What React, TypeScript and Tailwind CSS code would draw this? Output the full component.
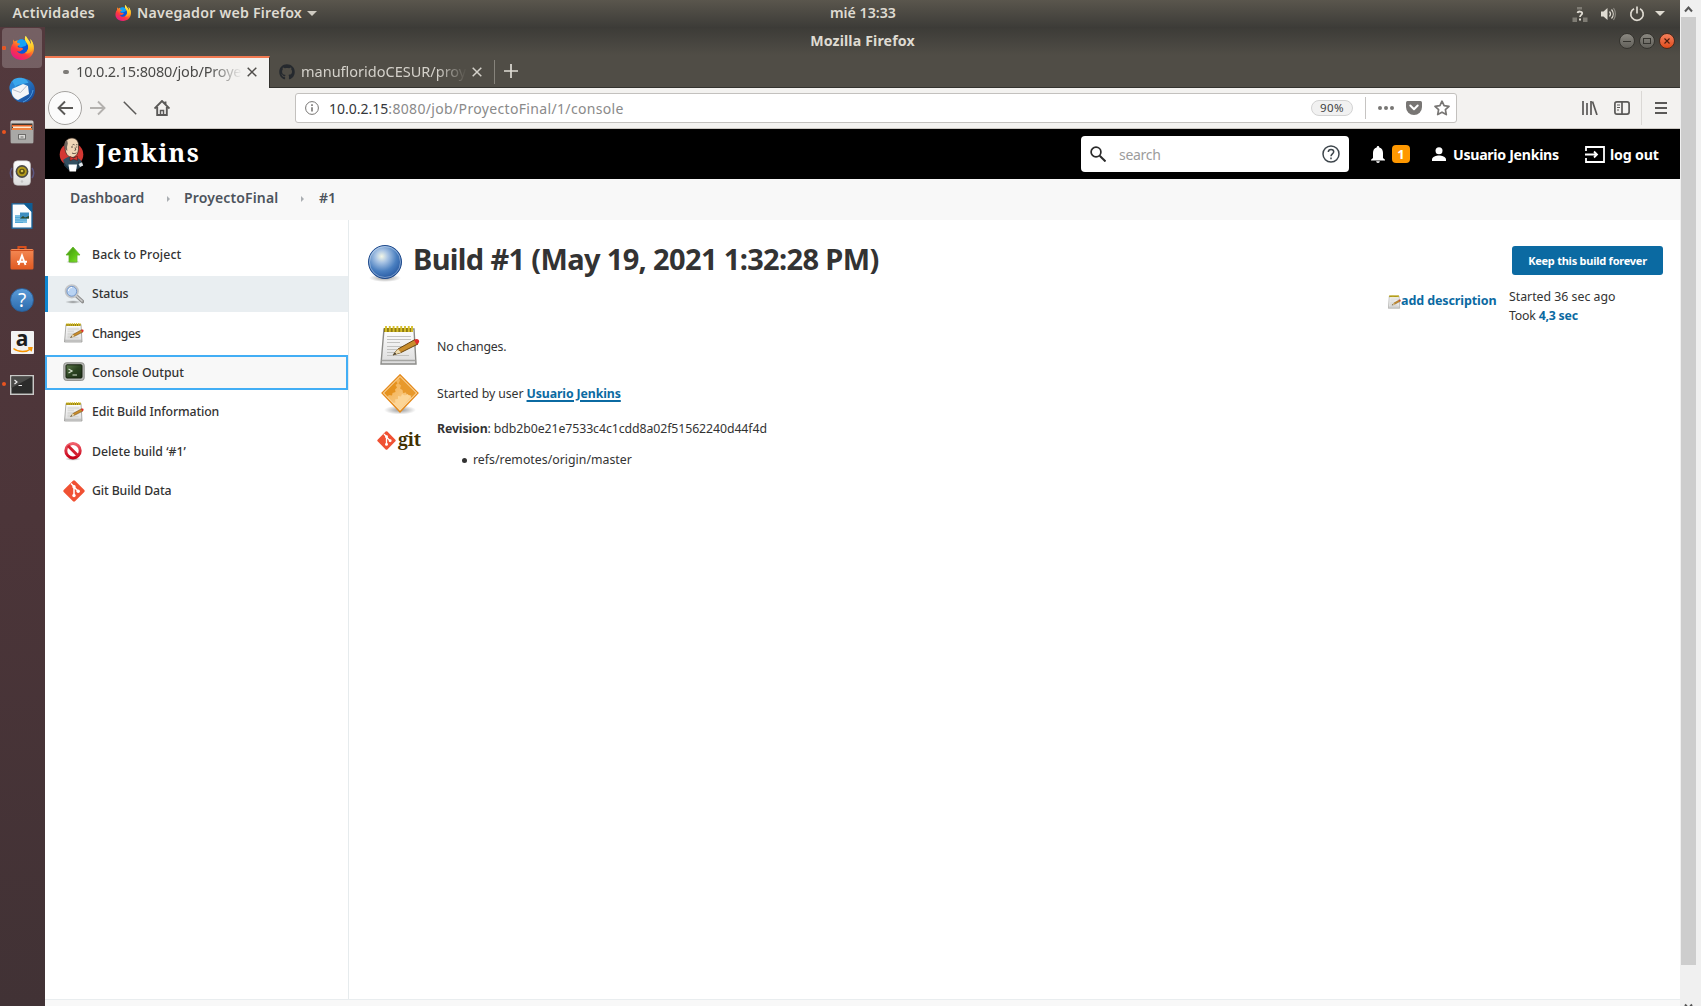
import React from "react";
import { FaGithub } from "react-icons/fa";

type P = { className?: string };

function Defs() {
  return (
    <svg width="0" height="0" className="absolute">
      <defs>
        <linearGradient id="ffo" x1="0.8" y1="0" x2="0.2" y2="1">
          <stop offset="0" stopColor="#fff44f" /><stop offset="0.35" stopColor="#ffa41e" /><stop offset="0.65" stopColor="#ff3a3c" /><stop offset="1" stopColor="#e01590" />
        </linearGradient>
        <linearGradient id="ffy" x1="0" y1="0" x2="0" y2="1">
          <stop offset="0" stopColor="#fff44f" /><stop offset="0.6" stopColor="#ffc928" /><stop offset="1" stopColor="#ff9020" />
        </linearGradient>
        <linearGradient id="tb" x1="0" y1="0" x2="1" y2="1">
          <stop offset="0" stopColor="#2fa0e8" /><stop offset="1" stopColor="#173f8f" />
        </linearGradient>
        <linearGradient id="gray" x1="0" y1="0" x2="0" y2="1">
          <stop offset="0" stopColor="#d0cfcd" /><stop offset="1" stopColor="#8c8b89" />
        </linearGradient>
        <linearGradient id="paper" x1="0" y1="0" x2="0" y2="1">
          <stop offset="0" stopColor="#ffffff" /><stop offset="1" stopColor="#dcdcdc" />
        </linearGradient>
        <linearGradient id="orange" x1="0" y1="0" x2="0" y2="1">
          <stop offset="0" stopColor="#f58a55" /><stop offset="1" stopColor="#e05a22" />
        </linearGradient>
        <linearGradient id="green" x1="0" y1="0" x2="1" y2="1">
          <stop offset="0" stopColor="#3f8f10" /><stop offset="0.6" stopColor="#5fc516" /><stop offset="1" stopColor="#8de23a" />
        </linearGradient>
        <linearGradient id="con" x1="0" y1="0" x2="1" y2="1">
          <stop offset="0" stopColor="#5d7a4c" /><stop offset="0.5" stopColor="#2b4321" /><stop offset="1" stopColor="#1c2e17" />
        </linearGradient>
        <linearGradient id="no" x1="0" y1="0" x2="0" y2="1">
          <stop offset="0" stopColor="#f0606c" /><stop offset="1" stopColor="#c60016" />
        </linearGradient>
        <radialGradient id="ball" cx="0.4" cy="0.33" r="0.75">
          <stop offset="0" stopColor="#f3f7e6" /><stop offset="0.25" stopColor="#a9c4e4" /><stop offset="0.6" stopColor="#4a7fc0" /><stop offset="1" stopColor="#1e4f9a" />
        </radialGradient>
        <radialGradient id="shade">
          <stop offset="0" stopColor="#000" stopOpacity="0.4" /><stop offset="1" stopColor="#000" stopOpacity="0" />
        </radialGradient>
        <linearGradient id="dia" x1="0" y1="0" x2="1" y2="1">
          <stop offset="0" stopColor="#f0a53c" /><stop offset="1" stopColor="#fdd9a0" />
        </linearGradient>
      </defs>
    </svg>
  );
}

const Firefox = ({ className }: P) => (
  <svg viewBox="0 0 24 24" className={className}>
    <circle cx="12" cy="12.200" r="8.800" fill="#0a56d8" />
    <path d="M7 5c3-2.500 6.500-2 8.500 0 2 2.500 1 5.500-2 5.500l-3 1-3-2z" fill="#13a3f5" />
    <path d="M3.500 3.500c-.6 1.200-.5 2.600-.3 3.500C.8 10 0 14 1.200 17.500 3 22 7.500 24 12.200 24 18.500 24 24 19 24 12.500c0-3-1-6.500-3.800-9.500.8 2 .9 4 .5 5.500-.8-3.600-3.600-5.500-4.900-8.500-2.300 3 .6 6 1.900 8.500 1.300 3 .2 6.800-2.800 8.500-3 1.400-6.700.4-8-2 1.800.8 3.600.4 4.700-.8 1.200-.8 1.800-.4 1.400-1.400-.8-1.400-2.600-.5-4-1.200C7.500 11 7.600 10.400 8 9.500l1.800-1c.5-.5.4-1-.1-1.100-1 0-2.200-.2-2.500-.9C7 5.600 7.400 5 8 4.300c-1.600.2-2.600.6-3.200 1.300-.6-.4-1-1.100-1.300-2.100z" fill="url(#ffo)" />
    <path d="M15.800 0c-2.300 3 .6 6 1.900 8.500 1.300 3 .2 6.800-2.800 8.500 4 1.500 8-1.500 8.500-6 .2-3-1-6-3.200-8 .8 2 .9 4 .5 5.500-.8-3.600-3.600-5.500-4.900-8.500z" fill="url(#ffy)" />
  </svg>
);

const Thunderbird = () => (
  <svg viewBox="0 0 26 26" className="mb-[1px] size-[26px]">
    <circle cx="14" cy="13.500" r="12" fill="url(#tb)" />
    <path d="M1 9C2 4 5 1 10 .8c5-.3 8 2 9.500 5L8 8 3 13z" fill="#3aa7ec" />
    <path d="M.5 9 3 4l3 5-3 8C1 15 0 12 .5 9z" fill="#2a86d6" />
    <path d="M3 12 14 7l5 2 1 8-11 6c-5-2-7-6-6-11z" fill="#f4f5f7" />
    <path d="m3.500 12.500 8 3L17.500 9" fill="none" stroke="#b8bec9" strokeWidth="1" />
    <path d="M14 25c5-2 9-6 10-12" fill="none" stroke="#4f9de0" strokeWidth="1" />
  </svg>
);

const Files = () => (
  <svg viewBox="0 0 24 24" className="size-6">
    <rect x="0.500" y="0.500" width="23" height="23" rx="1.500" fill="url(#gray)" />
    <rect x="1.500" y="3.500" width="21" height="8.500" fill="#42362f" />
    <rect x="2" y="5" width="20" height="2" fill="#e8672a" />
    <rect x="3" y="6.500" width="18" height="2" fill="#fbe7cf" />
    <rect x="2" y="8" width="20" height="2" fill="#ee8342" />
    <rect x="1" y="10" width="22" height="13" fill="#a9a8a6" />
    <rect x="8.500" y="14.500" width="7" height="4.500" fill="#dcdbd9" stroke="#6d6c6a" />
    <rect x="10.500" y="16.500" width="3" height="1" fill="#6d6c6a" />
  </svg>
);

const Speaker = () => (
  <svg viewBox="0 0 26 26" className="mb-[2px] size-[26px]">
    <path d="M3 8c-2 3-2 7 0 10M23 8c2 3 2 7 0 10" fill="none" stroke="#5c5780" strokeWidth="1.500" />
    <rect x="4.500" y="0.800" width="17" height="24.500" rx="4" fill="url(#paper)" stroke="#c0c0c0" strokeWidth="0.600" />
    <circle cx="13" cy="11.500" r="6.400" fill="#4b4a48" />
    <circle cx="13" cy="11.500" r="4.800" fill="#b29a1c" />
    <circle cx="13" cy="11.500" r="2.800" fill="#5b4f12" />
    <circle cx="13" cy="11" r="1.300" fill="#d8c34a" />
    <circle cx="13" cy="21.500" r="1.200" fill="#c4c4c4" />
  </svg>
);

const Writer = () => (
  <svg viewBox="0 0 24 26" className="h-[26px] w-6">
    <path d="M2 .8h12.500L22 8.500v16.700H2z" fill="#fcfdfe" stroke="#12619a" strokeWidth="1.300" />
    <path d="M13.500 0H22.500V9.500z" fill="#0f5d94" />
    <rect x="5" y="12" width="12" height="8" fill="#7cbfe2" />
    <rect x="10" y="9.500" width="9" height="6" fill="#3f8fc0" />
    <path d="m10 15.500 3-2.500 2 1.500 4-1.500v2.500z" fill="#2d4a2c" />
    <path d="M5 14.500h5M5 17h12M5 19.500h8" stroke="#4aa3d4" strokeWidth="0.900" />
  </svg>
);

const Software = () => (
  <svg viewBox="0 0 24 26" className="h-[26px] w-6">
    <path d="M8.500 5V2h7v3" fill="none" stroke="#d64f1d" strokeWidth="2.200" />
    <rect x="0.500" y="4" width="23" height="20.500" rx="1.500" fill="url(#orange)" />
    <path d="M0.500 5.500h23" stroke="#c8491a" strokeWidth="1" />
    <path d="m8.500 20 3.500-9.500 3.500 9.500M7 16.800h10" fill="none" stroke="#fff" strokeWidth="1.900" />
  </svg>
);

const HelpApp = () => (
  <span className="flex size-6 items-center justify-center rounded-full border border-[#2a5f98] bg-linear-to-b from-[#5b9bd8] to-[#2c6cad] font-['Noto_Sans'] text-[19px] leading-none text-white">?</span>
);

const Amazon = () => (
  <span className="relative flex size-[23px] justify-center rounded-[1px] bg-[#f2f2f2] font-['Noto_Sans'] text-[21px] leading-[15px] font-bold text-[#1d1d1d]">
    a
    <svg viewBox="0 0 23 6" className="absolute bottom-[1px] left-0 h-[6px] w-[23px]">
      <path d="M2.500 1.500c5 4 13 4 17 .5M17 1l3.800-.3-.8 3.500" fill="none" stroke="#f79400" strokeWidth="1.600" />
    </svg>
  </span>
);

const Terminal = () => (
  <svg viewBox="0 0 24 20" className="mt-[2px] h-5 w-6">
    <rect x="0.700" y="0.700" width="22.600" height="18.600" fill="#2c2c2b" stroke="#c9c9c7" strokeWidth="1.500" />
    <path d="M1.500 1.500h21L1.500 13z" fill="#4b4b49" />
    <path d="m4.500 5 2.500 2-2.500 2M8.500 10.500h3.500" fill="none" stroke="#eee" strokeWidth="1.200" />
  </svg>
);

const apps: { icon: React.ReactNode; run?: boolean; active?: boolean }[] = [
  { icon: <Firefox className="size-6" />, run: true, active: true },
  { icon: <Thunderbird /> },
  { icon: <Files />, run: true },
  { icon: <Speaker /> },
  { icon: <Writer /> },
  { icon: <Software /> },
  { icon: <HelpApp /> },
  { icon: <Amazon /> },
  { icon: <Terminal />, run: true },
];

function Launcher() {
  return (
    <nav className="flex w-[45px] shrink-0 flex-col bg-linear-to-b from-[#53393d] via-[#4c3539] to-[#413235]">
      {apps.map((a, i) => (
        <div key={i} className="flex h-[42px] items-center">
          <span className={a.run ? "ml-[2px] size-1 rounded-full bg-[#e95420]" : "ml-[2px] size-1"} />
          <span className={a.active ? "-ml-1 flex size-10 items-center justify-center rounded-[4px] bg-white/20" : "-ml-1 flex size-10 items-center justify-center"}>
            {a.icon}
          </span>
          {a.active && <span className="-ml-10 size-1 rounded-full bg-[#e95420]" />}
        </div>
      ))}
    </nav>
  );
}

function Panel() {
  return (
    <div className="grid h-[27px] grid-cols-[1fr_auto_1fr] items-center bg-linear-to-b from-[#5a564d] to-[#3d3c38] font-['Noto_Sans'] text-[14.2px] font-semibold text-[#dfdbd2]">
      <div className="flex items-center pl-[12.500px] leading-none">
        <span className="w-[102.500px] tracking-[0.27px]">Actividades</span>
        <Firefox className="mb-[1px] size-4" />
        <span className="ml-[6px] tracking-[0.22px]">Navegador web Firefox</span>
        <span className="ml-[5px] border-x-[5px] border-t-[5px] border-x-transparent border-t-[#cfcbc2]" />
      </div>
      <span className="ml-[46px] leading-none">mié 13:33</span>
      <div className="flex items-center justify-end pr-[15px]">
        <svg viewBox="0 0 16 16" className="mr-[12px] size-4">
          <path d="M5 1h5v2.500H5zM.5 11.500H5V16H.5zM11 11.500h4.500V16H11z" fill="#7f7c74" />
          <path d="M5.500 7c.3-2 4.700-2 4.700.2 0 1.600-2.200 1.700-2.200 3.800" fill="none" stroke="#dfdbd2" strokeWidth="1.800" />
          <path d="M7 12.500h2v2H7z" fill="#dfdbd2" />
        </svg>
        <svg viewBox="0 0 16 16" className="mr-[13px] size-4">
          <path d="M1 5.500h2.500L7.500 2v12l-4-3.500H1z" fill="#dfdbd2" />
          <path d="M9.500 5.500c1.300 1.500 1.300 3.500 0 5M11.500 3.500c2.300 2.600 2.300 6.400 0 9" fill="none" stroke="#dfdbd2" strokeWidth="1.200" />
          <path d="M13.500 2c2.500 3.500 2.500 8.500 0 12" fill="none" stroke="#8d8a82" strokeWidth="1.200" />
        </svg>
        <svg viewBox="0 0 16 16" className="mr-[10px] size-4">
          <path d="M5 2.700a6.200 6.200 0 1 0 6 0M8 .5v7" fill="none" stroke="#dfdbd2" strokeWidth="1.700" />
        </svg>
        <span className="border-x-[5px] border-t-[5px] border-x-transparent border-t-[#dfdbd2]" />
      </div>
    </div>
  );
}

function TitleBar() {
  return (
    <div className="grid h-[28px] grid-cols-[1fr_auto_1fr] items-center bg-linear-to-b from-[#3c3b37] to-[#504d46] font-['Noto_Sans'] text-[14.2px] font-bold text-[#dfdbd2]">
      <span />
      <span className="tracking-[0.12px] leading-none">Mozilla Firefox</span>
      <div className="flex justify-end gap-1 pr-[5px]">
        <span className="flex size-4 items-center justify-center rounded-full border border-[#35342f] bg-linear-to-b from-[#8a8881] to-[#62605a]">
          <span className="h-px w-2 bg-[#35342f]" />
        </span>
        <span className="flex size-4 items-center justify-center rounded-full border border-[#35342f] bg-linear-to-b from-[#8a8881] to-[#62605a]">
          <span className="h-[6px] w-2 border border-[#35342f]" />
        </span>
        <span className="flex size-4 items-center justify-center rounded-full border border-[#4a2a1c] bg-linear-to-b from-[#f4805b] to-[#df4a16]">
          <svg viewBox="0 0 6 6" className="size-[6px]"><path d="m.5.5 5 5m0-5-5 5" stroke="#4a1c0c" strokeWidth="1.100" /></svg>
        </span>
      </div>
    </div>
  );
}

const Cross = ({ className }: P) => (
  <svg viewBox="0 0 10 10" className={className} fill="none" stroke="currentColor" strokeWidth="1.500"><path d="m.7.7 8.600 8.600m0-8.600L.7 9.300" /></svg>
);

function Tabs() {
  return (
    <div className="flex h-[33px] bg-[#504d46] font-['Noto_Sans'] text-[14.5px] leading-none">
      <div className="mt-[1px] flex w-[225px] items-center border-t-2 border-r border-t-[#f27a52] border-r-[#33322e] bg-[#f3f2f0] pb-[3px] pl-[18px] text-[#4a4a48]">
        <span className="h-1 w-[6px] rounded-full bg-[#7d7b77]" />
        <span className="ml-[7px] w-[166px] py-1 tracking-[-0.16px] whitespace-nowrap mask-r-from-80% mask-r-to-100%">10.0.2.15:8080/job/Proye</span>
        <Cross className="ml-[5px] size-[10px] text-[#4f4d4a]" />
      </div>
      <div className="flex flex-1 items-center border-b border-[#33322e] pt-[1px] text-[#d4d1ca]">
        <FaGithub className="ml-[9px] size-4 text-[#25292e]" />
        <span className="-mt-[1px] ml-[6px] w-[166px] py-1 whitespace-nowrap mask-r-from-82% mask-r-to-100%">manufloridoCESUR/proy</span>
        <Cross className="ml-[5px] size-[10px] text-[#d4d1ca]" />
        <span className="ml-[12px] h-6 w-px bg-[#86837b]" />
        <svg viewBox="0 0 14 14" className="mb-[1px] ml-[9px] size-[14px]"><path d="M7 0v14M0 7h14" stroke="#dedbd4" strokeWidth="1.700" /></svg>
      </div>
    </div>
  );
}

function Toolbar() {
  return (
    <div className="flex h-[41px] items-center border-b border-[#cbc7c2] bg-[#f3f2f0] pl-[3px] font-['Noto_Sans'] text-[#5a5957]">
      <span className="flex size-[34px] items-center justify-center rounded-full border border-[#a5a3a0] bg-[#fbfbfb]">
        <svg viewBox="0 0 16 16" className="size-4" fill="none" stroke="currentColor" strokeWidth="1.900"><path d="M16 8H1.500M8 1.500 1.500 8 8 14.500" /></svg>
      </span>
      <svg viewBox="0 0 16 16" className="ml-2 size-4 text-[#b3b1ae]" fill="none" stroke="currentColor" strokeWidth="1.900"><path d="M0 8h14.500M8 1.500 14.500 8 8 14.500" /></svg>
      <svg viewBox="0 0 14 14" className="ml-[17px] size-[14px]" stroke="currentColor" strokeWidth="1.500"><path d="m.8.8 12.400 12.400" /></svg>
      <svg viewBox="0 0 16 16" className="ml-[17px] size-4" fill="none" stroke="currentColor" strokeWidth="1.900"><path d="M.5 8.500 8 1l7.500 7.500M3.200 7v8h9.600V7M11.500 1.500v3" /><path d="M6.500 15v-4.500h3V15" strokeWidth="1.500" /></svg>
      <div className="ml-[125px] flex h-[30px] w-[1162px] items-center rounded-[3px] border border-[#c3c1be] bg-white pr-[6px] pl-[9px] text-[14px] leading-none">
        <svg viewBox="0 0 14 14" className="size-[14px]" fill="none" stroke="#767472"><circle cx="7" cy="7" r="6.400" /><path d="M7 6.200v4.300M7 3.300v1.600" strokeWidth="1.600" /></svg>
        <span className="mt-[2px] ml-[10px] text-[#35363a]">10.0.2.15</span>
        <span className="mt-[2px] flex-1 tracking-[0.34px] text-[#8a8a8a]">:8080/job/ProyectoFinal/1/console</span>
        <span className="flex h-4 w-[42px] items-center justify-center rounded-full border border-[#d3d3d3] bg-[#f1f1f1] text-[11.5px] tracking-[0.4px] text-[#3f3f3f]">90%</span>
        <span className="ml-[12px] h-[22px] w-px bg-[#c6c4c2]" />
        <svg viewBox="0 0 16 4" className="ml-[12px] h-1 w-4" fill="#787674"><circle cx="2" cy="2" r="2" /><circle cx="8" cy="2" r="2" /><circle cx="14" cy="2" r="2" /></svg>
        <svg viewBox="0 0 16 14" className="ml-[12px] h-[14px] w-4"><path d="M1.500 0h13Q16 0 16 1.500V6A8 8 0 0 1 0 6V1.500Q0 0 1.500 0z" fill="#787674" /><path d="m4.300 4.500 3.700 3.700 3.700-3.700" fill="none" stroke="#fff" strokeWidth="2" strokeLinecap="round" strokeLinejoin="round" /></svg>
        <svg viewBox="0 0 16 16" className="ml-[12px] size-4" fill="none" stroke="#787674" strokeWidth="1.700" strokeLinejoin="round"><path d="m8 1.200 2.100 4.500 4.900.6-3.600 3.400.9 4.900L8 12.200l-4.300 2.400.9-4.900L1 6.300l4.900-.6z" /></svg>
      </div>
      <svg viewBox="0 0 16 14" className="ml-[125px] h-[14px] w-4" stroke="currentColor" strokeWidth="1.700"><path d="M1 0v14M5 2v12M9 0v14M10.500.5 15 14" /></svg>
      <svg viewBox="0 0 16 14" className="ml-[16px] h-[14px] w-4" fill="none" stroke="currentColor" strokeWidth="1.700"><rect x="0.900" y="0.900" width="14.200" height="12.200" rx="2" /><path d="M8 1v12" /><path d="M3 4h3M3 6.500h3M3 9h2" strokeWidth="1" /></svg>
      <span className="ml-[11px] h-[34px] w-px bg-[#dad8d5]" />
      <svg viewBox="0 0 12 12" className="ml-[13px] size-3" stroke="currentColor" strokeWidth="2"><path d="M0 1h12M0 6h12M0 11h12" /></svg>
    </div>
  );
}

function JenkinsHead() {
  return (
    <svg viewBox="0 0 26 35" className="h-[35px] w-[26px]">
      <circle cx="12.500" cy="17.500" r="11.800" fill="#d33833" />
      <path d="M4 23c3-2.500 6-3.500 9-3.500s7 1.500 9.500 4.500l-1 6c-4 3-11 3-14 0z" fill="#335061" />
      <path d="M4.500 24c2 4 4 6 6.500 7l-1 2.500-5-5zM19 24l3 5-4 4z" fill="#1f3644" />
      <path d="M6 10C5 4 9 1 13 1c5 .3 7 4 6.500 9 .2 6-2 10-6.500 10.500C8.500 20 6 16 6 10z" fill="#f0d6b7" stroke="#30251f" strokeWidth="0.700" />
      <path d="M6 12c-1.500-4 0-8 2-9.500l.8 4L8 10l.3 4z" fill="#6e625b" />
      <path d="M13.500 8c1-.8 1.800-.6 2.200.2M17 8c.8-.6 1.300-.4 1.700.1M12 10h2M16.800 10h1.500M16 10.500l.8 2.500-1.300.4M13 16c1.500.8 3 .8 4.500-.2" fill="none" stroke="#3a2e28" strokeWidth="0.800" />
      <path d="m11 19.500 3.500 1.500 4-1.800v4.300l-4-1.200-3.500 1.500z" fill="#d33833" stroke="#551410" strokeWidth="0.500" />
      <path d="M9.500 27.500h8.500l-1 7h-6.500z" fill="#fff" />
      <path d="m19.500 27 3.500-1.800 1.200 3.300-3.200 1.500z" fill="#dfe5ea" />
    </svg>
  );
}

function Header() {
  return (
    <header className="flex h-[50px] items-center bg-black pl-[14px] font-['Noto_Sans'] text-[14.2px] leading-none font-bold text-white">
      <JenkinsHead />
      <span className="mb-[3px] ml-[11px] w-[985px] font-['Noto_Serif'] text-[25px] tracking-[1.4px]">Jenkins</span>
      <div className="flex h-9 w-[268px] items-center rounded-[4px] bg-white pl-[9px]">
        <svg viewBox="0 0 16 16" className="size-4" fill="none" stroke="#2b2b2b" strokeWidth="1.700"><circle cx="6" cy="6" r="4.900" /><path d="m9.700 9.700 5.800 5.800" strokeWidth="2" /></svg>
        <span className="mt-[2px] ml-[13px] flex-1 text-[14px] font-normal tracking-[-0.3px] text-[#9c9c9c]">search</span>
        <svg viewBox="0 0 18 18" className="mr-[9px] size-[18px]" fill="none" stroke="#3e464c" strokeWidth="1.500"><circle cx="9" cy="9" r="8" /><path d="M6.300 7c.2-3.400 5.400-3.200 5.400-.2C11.700 8.800 9 9 9 11.200M9 12.600v1.600" /></svg>
      </div>
      <svg viewBox="0 0 14 17" className="ml-[22px] h-[17px] w-[14px]" fill="#fff"><path d="M7 0c.9 0 1.300.6 1.300 1.500C11 2.200 12 4.500 12 7v5l2 1.800v.7H0v-.7L2 12V7c0-2.500 1-4.800 3.700-5.500C5.700.6 6.100 0 7 0zM5.200 15.300h3.600C8.800 16.300 8 17 7 17s-1.800-.7-1.800-1.700z" /></svg>
      <span className="ml-[7px] flex h-[18px] w-[18px] items-center justify-center rounded-[4px] bg-[#ff9800] pt-[1px] text-[13px]">1</span>
      <svg viewBox="0 0 16 16" className="ml-[22px] size-[14px]" fill="#fff"><circle cx="8" cy="4.200" r="4" /><path d="M0 16v-2c0-2.800 5-4.300 8-4.300s8 1.500 8 4.300v2z" /></svg>
      <span className="mt-[2px] ml-[7px] w-[132px] tracking-[-0.31px] whitespace-nowrap">Usuario Jenkins</span>
      <svg viewBox="0 0 20 17" className="h-[17px] w-5" fill="none" stroke="#fff" strokeWidth="1.800"><path d="M1 5V1h18v15H1v-4M0 8.500h12M9 5.500l3 3-3 3" /></svg>
      <span className="mt-[2px] ml-[5px] tracking-[-0.17px] whitespace-nowrap">log out</span>
    </header>
  );
}

const CrumbArrow = () => <span className="mt-[3px] border-y-[3px] border-l-[3px] border-y-transparent border-l-[#aaaeb2]" />;

function Crumbs() {
  return (
    <div className="flex h-[41px] items-center bg-[#f8f8f8] pb-[4px] pl-[25px] font-['Noto_Sans'] text-[14px] leading-none font-semibold text-[#4d545d]">
      <span className="w-[97px] tracking-[-0.03px]">Dashboard</span>
      <CrumbArrow />
      <span className="ml-[14px] w-[117px] tracking-[0.14px]">ProyectoFinal</span>
      <CrumbArrow />
      <span className="ml-[15px]">#1</span>
    </div>
  );
}

const Notepad = ({ className }: P) => (
  <svg viewBox="0 0 40 40" preserveAspectRatio="none" className={className}>
    <path d="M4 3h30l2 35H1z" fill="url(#paper)" stroke="#8b8b88" strokeWidth="1.400" />
    <path d="M1.500 34.500h34" stroke="#a5a5a2" strokeWidth="1.400" />
    <path d="M4 2h29v4H4z" fill="#8f7b12" />
    <path d="M6 0v6M9.800 0v6M13.600 0v6M17.400 0v6M21.200 0v6M25 0v6M28.800 0v6M32 0v6" stroke="#d7c02c" strokeWidth="1.900" />
    <path d="M7 10.500h24M7 13.500h24M7 16.500h13M7 20.500h24M7 23.500h20M7 26.500h14M7 29.500h22" stroke="#c2c2c0" strokeWidth="1.200" />
    <path d="m13 29 5-6 17-9.500 3 4.500-17 8.500z" fill="#c98d2c" stroke="#6a4610" strokeWidth="1" />
    <path d="m13 29 5-6 3 3.500z" fill="#eddcb2" />
    <path d="m13 29 2-2.400 1.200 1.300z" fill="#222" />
    <path d="m34 14 2.500-.9c2.400-.3 3.600 2.800 1.700 4.200l-1.700 1.100z" fill="#df2c2c" />
  </svg>
);

const Arrow = () => (
  <svg viewBox="0 0 20 20" className="mr-[1px] size-5"><ellipse cx="10" cy="17" rx="7" ry="1.800" fill="url(#shade)" /><path d="m10 2 7 8h-3v7H6v-7H3z" fill="url(#green)" stroke="#62b52a" strokeWidth="0.800" /></svg>
);

const Magnifier = () => (
  <svg viewBox="0 0 20 20" className="size-5">
    <ellipse cx="9" cy="18" rx="8" ry="1.800" fill="url(#shade)" />
    <path d="m12.500 12 6 5.500" stroke="#8d8d8d" strokeWidth="3.600" strokeLinecap="round" />
    <path d="m13 12.500 5 4.500" stroke="#cfcfcf" strokeWidth="1.600" strokeLinecap="round" />
    <circle cx="7.800" cy="7.300" r="6" fill="#b9d3f3" stroke="#c3c5c8" strokeWidth="2.200" />
    <circle cx="7.800" cy="7.300" r="4.900" fill="none" stroke="#6d93c9" strokeWidth="0.900" />
    <path d="M4.500 7c0-2 1.500-3.500 3.500-3.500" stroke="#fff" fill="none" />
  </svg>
);

const Console = () => (
  <svg viewBox="0 0 22 20" className="h-5 w-[22px]">
    <rect x="0.800" y="0.800" width="20.400" height="17.600" rx="2.500" fill="#b9bab7" stroke="#8f908c" />
    <rect x="3" y="2.800" width="16" height="13.200" rx="1" fill="url(#con)" stroke="#16210f" />
    <path d="m5.500 7 3.500 2-3.500 2M9.500 13h4.500" fill="none" stroke="#d7e2cf" strokeWidth="1.200" />
  </svg>
);

const Forbidden = () => (
  <svg viewBox="0 0 20 20" className="mr-[1px] size-5"><ellipse cx="10" cy="18" rx="8" ry="1.800" fill="url(#shade)" /><circle cx="10" cy="9.700" r="7.200" fill="#fff" stroke="url(#no)" strokeWidth="3" /><path d="m5 4.700 10 10" stroke="#d3202f" strokeWidth="3" /></svg>
);

const GitMark = ({ className }: P) => (
  <svg viewBox="0 0 22 22" className={className}>
    <path d="M11 .3q.6 0 1 .4L21.300 10q.8 1 0 2L12 21.300q-1 .8-2 0L.7 12q-.8-1 0-2L10 .7q.4-.4 1-.4z" fill="#f05133" />
    <path d="M8 3.500 11 6.500v9M11.500 7.500l4 4" fill="none" stroke="#fff" strokeWidth="1.500" />
    <g fill="#fff"><circle cx="11" cy="6.700" r="1.700" /><circle cx="11" cy="15.500" r="1.700" /><circle cx="15.200" cy="11.200" r="1.700" /></g>
  </svg>
);

const tasks: { label: string; icon: React.ReactNode; cls: string; box?: string }[] = [
  { label: "Back to Project", icon: <Arrow />, cls: "mt-[2px] tracking-[0.11px]" },
  { label: "Status", icon: <Magnifier />, cls: "tracking-[-0.07px]", box: "status" },
  { label: "Changes", icon: <Notepad className="size-5" />, cls: "mt-[2px] tracking-[-0.36px]" },
  { label: "Console Output", icon: <Console />, cls: "mt-px tracking-[-0.02px]", box: "focus" },
  { label: "Edit Build Information", icon: <Notepad className="size-5" />, cls: "tracking-[-0.13px]" },
  { label: "Delete build ‘#1’", icon: <Forbidden />, cls: "mt-[2px]" },
  { label: "Git Build Data", icon: <GitMark className="size-[22px]" />, cls: "tracking-[-0.12px]" },
];

function SidePanel() {
  return (
    <aside className="flex w-[304px] shrink-0 flex-col gap-[3.4px] border-r border-[#e6ebed] pt-[16.5px] font-['Noto_Sans'] text-[12.300px] leading-none font-medium text-[#333]">
      {tasks.map((t) => (
        <a
          key={t.label}
          className={
            t.box === "status"
              ? "flex h-9 items-center border-l-[3px] border-[#0d86d1] bg-[#e9eef1] pl-[14px]"
              : t.box === "focus"
                ? "-mb-px flex h-[35px] items-center border-2 border-[#42aef5] bg-[#f8f8f8] pl-[15px] mb-px"
                : "flex h-9 items-center pl-[17px]"
          }
        >
          <span className="flex w-[23px] justify-center">{t.icon}</span>
          <span className={"ml-[7px] whitespace-nowrap " + t.cls}>{t.label}</span>
        </a>
      ))}
    </aside>
  );
}

function Main() {
  return (
    <main className="flex flex-1 items-start justify-between font-['Noto_Sans'] text-[12.300px] leading-none text-[#333]">
      <div className="pl-[18px]">
        <div className="mt-[24px] flex h-[36px] items-center">
          <svg viewBox="0 0 36 38" className="mt-[2px] h-[38px] w-9">
            <ellipse cx="18" cy="34" rx="16" ry="4" fill="url(#shade)" />
            <circle cx="18" cy="18" r="16.500" fill="url(#ball)" stroke="#1f4a8c" strokeWidth="1" />
            <circle cx="18" cy="18" r="15.500" fill="none" stroke="#fff" strokeOpacity="0.400" strokeWidth="0.900" />
          </svg>
          <h1 className="mb-[7px] ml-[10px] text-[29px] font-bold tracking-[-0.65px] whitespace-nowrap">Build #1 (May 19, 2021 1:32:28 PM)</h1>
        </div>
        <div className="mt-[46px] grid grid-cols-[57px_auto] pl-[13px]">
          <Notepad className="size-10" />
          <span className="mt-[15px] tracking-[-0.22px]">No changes.</span>
          <svg viewBox="0 0 40 42" className="mt-[8px] h-[42px] w-10">
            <ellipse cx="20" cy="36" rx="16" ry="4.500" fill="url(#shade)" />
            <path d="M20 .8 38 19 20 38 2 19z" fill="url(#dia)" stroke="#e58a1c" strokeWidth="1.300" />
            <path d="M20 2.500 16 7l1.500 2.500-2 1.500 1.500 2.500-2 2 .5 2.500-3 1-.5 2.500-3-.5-2 2L4 19z" fill="#e5921f" />
            <path d="m20 2.500 16.500 16.500-5 5-1.500-3-3 .5-1-3-3 .5-.5-3-2.500-1.500 1-3-2.500-2 1.500-3-1-2z" fill="#e8992c" />
            <path d="m20 36-7-7 2.500-.5-.5-3 3-.5 0-3 3 .5 1-2.500 3 1.500 2.500-1.500 2 2 2-.5z" fill="#fcd596" />
            <path d="M20 2.500 36.500 19 20 36 3.500 19z" fill="none" stroke="#fbd9a5" strokeWidth="1" />
          </svg>
          <span className="mt-[22px] whitespace-nowrap tracking-[-0.08px]">
            Started by user{" "}
            <a className="font-bold tracking-[-0.1px] text-[#0b6aa2] underline decoration-2 underline-offset-2">Usuario Jenkins</a>
          </span>
          <div className="mt-[12px] -ml-[3px] flex h-6 items-center">
            <GitMark className="size-[19px]" />
            <span className="mb-[3px] ml-[2px] font-['Noto_Serif'] text-[18px] leading-none font-bold tracking-[-0.3px] text-[#413000]">git</span>
          </div>
          <div className="mt-[7px]">
            <p className="whitespace-nowrap tracking-[-0.08px]">
              <b className="tracking-[-0.11px]">Revision</b>: bdb2b0e21e7533c4c1cdd8a02f51562240d44f4d
            </p>
            <div className="mt-[19px] flex items-center pl-[25px]">
              <span className="mt-[1px] size-[5px] rounded-full bg-[#333]" />
              <span className="ml-[6px] tracking-[0.02px]">refs/remotes/origin/master</span>
            </div>
          </div>
        </div>
      </div>
      <div className="flex w-[292px] flex-col pt-[26px]">
        <a className="mr-[17px] flex h-[29px] w-[151px] items-center justify-center self-end rounded-[3px] bg-[#0b6aa2] text-[11px] font-bold tracking-[-0.24px] whitespace-nowrap text-white">Keep this build forever</a>
        <div className="mt-[15px] flex">
          <Notepad className="mt-[5px] h-[14px] w-[13px]" />
          <a className="mt-[5px] w-[108px] text-[12.500px] font-bold tracking-[-0.1px] text-[#0b6aa2]">add description</a>
          <div>
            <p className="mt-[1px]">Started 36 sec ago</p>
            <p className="mt-[7px] tracking-[-0.2px]">Took <b className="text-[#0b6aa2]">4,3 sec</b></p>
          </div>
        </div>
      </div>
    </main>
  );
}

function Scrollbar() {
  return (
    <div className="flex w-[21px] flex-col overflow-hidden bg-[#f0f0f0] pl-[1px]">
      <svg viewBox="0 0 15 17" className="h-[17px] w-[15px] shrink-0" fill="none" stroke="#555" strokeWidth="2"><path d="m4 11.500 3.500-4 3.500 4" /></svg>
      <div className="h-[948px] w-[15px] shrink-0 bg-[#cdcdcd]" />
      <svg viewBox="0 0 15 17" className="mt-[32px] h-[17px] w-[15px] shrink-0" fill="none" stroke="#555" strokeWidth="2"><path d="m4 7.500 3.500 4 3.500-4" /></svg>
    </div>
  );
}

export default function App() {
  return (
    <div className="flex h-[1006px] w-[1701px] overflow-hidden bg-white">
      <Defs />
      <div className="flex w-[1680px] flex-col">
        <Panel />
        <div className="flex flex-1">
          <Launcher />
          <div className="flex flex-1 flex-col">
            <TitleBar />
            <Tabs />
            <Toolbar />
            <Header />
            <Crumbs />
            <div className="flex flex-1">
              <SidePanel />
              <Main />
            </div>
            <div className="h-[7px] border-t border-[#e9edef] bg-[#f8f8f8]" />
          </div>
        </div>
      </div>
      <Scrollbar />
    </div>
  );
}
